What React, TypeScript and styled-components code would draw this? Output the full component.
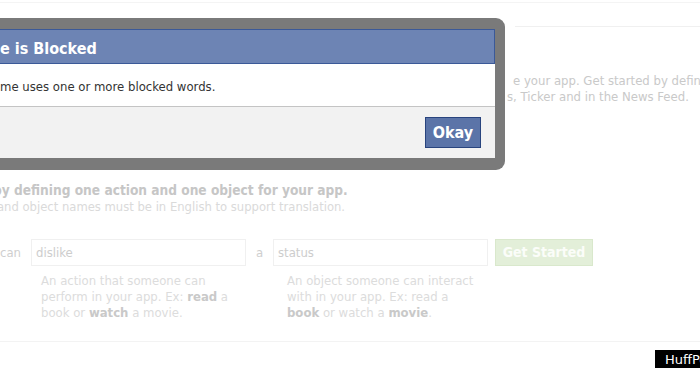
import React from "react";
import styled, { createGlobalStyle } from "styled-components";

const FONT = `"DejaVu Sans Condensed", "DejaVu Sans", sans-serif`;

const Global = createGlobalStyle`
  html, body { margin: 0; padding: 0; background: #fff; }
  body { width: 700px; height: 368px; overflow: hidden; font-family: ${FONT}; font-stretch: semi-condensed; }
`;

const Page = styled.div`
  position: relative;
  width: 700px;
  height: 368px;
  overflow: hidden;
  background: #fff;
`;

const TopRule = styled.div`
  height: 1px;
  background: #f4f4f4;
  margin: 2px 0 0 0;
`;

const HeaderRule = styled.div`
  height: 1px;
  background: #f0f0f0;
  margin: 23px 0 0 515px;
`;

const Intro = styled.p`
  margin: 46px 0 0 507px;
  text-indent: 6px;
  font-size: 13px;
  line-height: 16px;
  color: #c9c9c9;
  white-space: nowrap;
`;

const Headline = styled.h3`
  margin: 77px 0 0 -7px;
  font-size: 13.6px;
  line-height: 17px;
  font-weight: bold;
  color: #c6c6c6;
  white-space: nowrap;
`;

const SubLine = styled.p`
  margin: 0 0 0 -3px;
  font-size: 12.9px;
  line-height: 16px;
  color: #dadada;
  white-space: nowrap;
`;

const FormRow = styled.div`
  display: flex;
  align-items: center;
  margin: 23px 0 0 0;
  height: 28px;
`;

const Label = styled.span<{ $w: number; $align?: string }>`
  width: ${(p) => p.$w}px;
  font-size: 13px;
  color: #cfcfcf;
  white-space: nowrap;
  text-align: ${(p) => p.$align || "left"};
`;

const Field = styled.div`
  box-sizing: border-box;
  width: 215px;
  height: 27px;
  border: 1px solid #f0f0f0;
  padding: 0 4px;
  display: flex;
  align-items: center;
  font-size: 13px;
  color: #cdcdcd;
`;

const StartButton = styled.div`
  box-sizing: border-box;
  margin-left: 7px;
  width: 98px;
  height: 27px;
  background: #e3efd9;
  border: 1px solid #d9e8cc;
  color: #fbfdf9;
  font-size: 14px;
  font-weight: bold;
  display: flex;
  align-items: center;
  justify-content: center;
`;

const HelpRow = styled.div`
  display: flex;
  margin: 7px 0 0 41px;
`;

const Help = styled.p<{ $w: number }>`
  margin: 0;
  width: ${(p) => p.$w}px;
  font-size: 13px;
  line-height: 16px;
  color: #dcdcdc;
  white-space: nowrap;
  b { color: #c9c9c9; }
`;

const BottomRule = styled.div`
  height: 1px;
  background: #f3f3f3;
  margin-top: 20px;
`;

const Badge = styled.div`
  position: absolute;
  left: 655px;
  top: 350px;
  width: 60px;
  height: 18px;
  background: #000;
  color: #fff;
  font-family: "DejaVu Sans", sans-serif;
  font-stretch: normal;
  font-size: 13px;
  line-height: 19px;
  padding-left: 10px;
  white-space: nowrap;
`;

/* Dialog */
const Frame = styled.div`
  position: absolute;
  left: -10px;
  top: 18px;
  width: 495px;
  padding: 11px 10px 12px 10px;
  background: #7a7a7a;
  border-radius: 9px;
`;

const DialogHead = styled.div`
  height: 33px;
  background: #6d84b4;
  border: 1px solid #3b5998;
  border-left: none;
  color: #fff;
  font-size: 16px;
  font-weight: bold;
  line-height: 37px;
  white-space: nowrap;
`;

const DialogBody = styled.div`
  height: 42px;
  background: #fff;
  color: #333;
  font-size: 13px;
  line-height: 45px;
  white-space: nowrap;
`;

const DialogFoot = styled.div`
  height: 52px;
  background: #f2f2f2;
  border-top: 1px solid #c4c4c4;
  display: flex;
  justify-content: flex-end;
  align-items: flex-start;
  padding: 10px 14px 0 0;
  box-sizing: border-box;
`;

const OkButton = styled.button`
  box-sizing: border-box;
  width: 56px;
  height: 31px;
  background: #5b74a8;
  border: 1px solid #29447e;
  color: #fff;
  font-family: ${FONT};
  font-stretch: semi-condensed;
  font-size: 16px;
  font-weight: bold;
  padding: 0;
  cursor: pointer;
`;

export default function App() {
  return (
    <Page>
      <Global />
      <TopRule />
      <HeaderRule />
      <Intro>
        e your app. Get started by defining
        <br />
        s, Ticker and in the News Feed.
      </Intro>
      <Headline>by defining one action and one object for your app.</Headline>
      <SubLine>and object names must be in English to support translation.</SubLine>
      <FormRow>
        <Label $w={31}>can</Label>
        <Field>dislike</Field>
        <Label $w={27} $align="center">a</Label>
        <Field>status</Field>
        <StartButton>Get Started</StartButton>
      </FormRow>
      <HelpRow>
        <Help $w={246}>
          An action that someone can
          <br />
          perform in your app. Ex: <b>read</b> a
          <br />
          book or <b>watch</b> a movie.
        </Help>
        <Help $w={200}>
          An object someone can interact
          <br />
          with in your app. Ex: read a
          <br />
          <b>book</b> or watch a <b>movie</b>.
        </Help>
      </HelpRow>
      <BottomRule />
      <Badge>HuffPost</Badge>
      <Frame>
        <DialogHead>e is Blocked</DialogHead>
        <DialogBody>me uses one or more blocked words.</DialogBody>
        <DialogFoot>
          <OkButton>Okay</OkButton>
        </DialogFoot>
      </Frame>
    </Page>
  );
}
